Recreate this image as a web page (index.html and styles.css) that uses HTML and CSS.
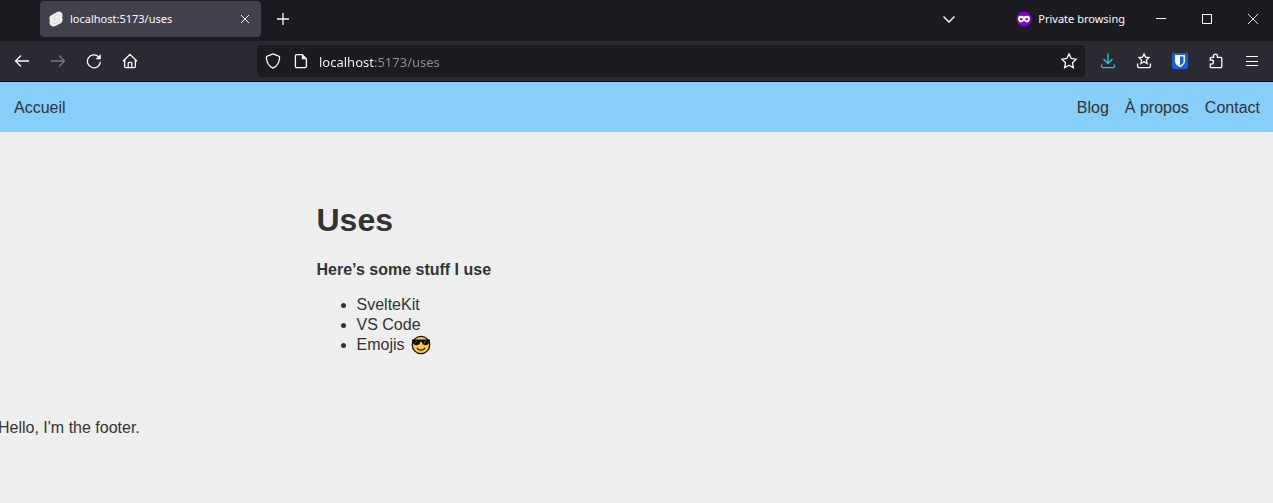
FILE: index.html
```html
<!DOCTYPE html>
<html lang="fr">
<head>
<meta charset="utf-8">
<meta name="viewport" content="width=device-width, initial-scale=1">
<title>localhost:5173/uses</title>
<link rel="stylesheet" href="styles.css">
</head>
<body>
<div class="browser">
  <div class="tab-strip">
    <div class="tab">
      <svg class="favicon" width="14" height="16" viewBox="0 0 14 16" aria-hidden="true">
        <path d="M8 1.1C10-.2 12.3.6 13.2 2.8c.5 1.2.4 2.3-.1 3.6.9 2 .6 4.1-1 5.6L6.500 15C4.200 16.300 1.700 15.400.8 13.100c-.5-1.200-.4-2.300.1-3.500C0 7.600.3 5.600 1.900 4.500Z" fill="#f0f0f0"/>
        <path d="M10.600 5.400c.3-1.500-1.100-2.400-2.500-1.600L4.300 6.200C2.700 7.500 3.600 9.200 5.300 8.700l3-1.200c2-.5 2.900 1.500 1.400 2.800l-3.600 2.200c-1.400.8-2.900 0-2.600-1.600" fill="none" stroke="#d8d8dc" stroke-width="1"/>
      </svg>
      <span class="tab-title">localhost:5173/uses</span>
      <button class="tab-close" type="button" aria-label="Close tab">
        <svg width="10" height="10" viewBox="0 0 10 10"><path d="M1 1l8 8M9 1l-8 8"/></svg>
      </button>
    </div>
    <button class="new-tab" type="button" aria-label="New tab">
      <svg width="14" height="14" viewBox="0 0 14 14"><path d="M7 1v12M1 7h12" stroke-width="1.300"/></svg>
    </button>
    <button class="all-tabs" type="button" aria-label="List all tabs">
      <svg width="14" height="14" viewBox="0 0 14 14"><path d="M1.500 4.500L7 10l5.500-5.500" stroke-width="1.400"/></svg>
    </button>
    <div class="private">
      <svg width="16" height="16" viewBox="0 0 16 16" aria-hidden="true">
        <circle cx="8" cy="8" r="7.500" fill="#8000d7" stroke="none"/>
        <path fill="#fff" fill-rule="evenodd" stroke="none" d="M2 7.500C2 5.600 3 4.700 5 4.700c1.400 0 2 .7 3 .7s1.600-.7 3-.7c2 0 3 .9 3 2.800 0 2.400-1.100 3.900-3 3.900-1.500 0-2-1.400-3-1.400s-1.500 1.400-3 1.400c-1.900 0-3-1.500-3-3.900ZM3.600 8c1 1.700 2.400 1.700 3.400 0-1-1.500-2.400-1.500-3.400 0ZM9 8c1 1.700 2.400 1.700 3.400 0-1-1.500-2.400-1.500-3.400 0Z"/>
      </svg>
      <span>Private browsing</span>
    </div>
    <div class="window-controls">
      <button type="button" aria-label="Minimize"><svg width="10" height="10" viewBox="0 0 10 10" shape-rendering="crispEdges"><path d="M0 4.500h10"/></svg></button>
      <button type="button" aria-label="Maximize"><svg width="10" height="10" viewBox="0 0 10 10" shape-rendering="crispEdges"><path d="M.5.500h9v9h-9z"/></svg></button>
      <button type="button" aria-label="Close"><svg width="10" height="10" viewBox="0 0 10 10"><path d="M0 0l10 10M10 0L0 10" stroke-width=".9"/></svg></button>
    </div>
  </div>

  <div class="toolbar">
    <div class="tools">
      <button type="button" aria-label="Back"><svg width="16" height="16" viewBox="0 0 16 16"><path d="M15 8H1.500M7 2.500L1.500 8 7 13.500"/></svg></button>
      <button type="button" aria-label="Forward" disabled><svg width="16" height="16" viewBox="0 0 16 16"><path d="M1 8h13.500M9 2.500L14.500 8 9 13.500"/></svg></button>
      <button type="button" aria-label="Reload"><svg width="16" height="16" viewBox="0 0 16 16"><path d="M14.400 8.700A6.500 6.500 0 1 1 12.600 3.800"/><path d="M14.800 1v5.200H9.600z" fill="#fbfbfe" stroke="none"/></svg></button>
      <button type="button" aria-label="Home"><svg width="16" height="16" viewBox="0 0 16 16"><path d="M1 8.300L8 1.300l7 7M2.600 7v6.300c0 .8.500 1.300 1.300 1.300h8.200c.8 0 1.300-.5 1.300-1.300V7M6.200 14.500V10.200c0-.6.300-.9.900-.9h1.800c.6 0 .9.300.9.900v4.300"/></svg></button>
    </div>
    <div class="url-bar">
      <button type="button" aria-label="Tracking protection"><svg width="16" height="16" viewBox="0 0 16 16"><path d="M8 .9l5.700 2.300c.6.200.9.700.9 1.300-.2 5-2.400 8.700-6.600 10.600C3.800 13.200 1.600 9.500 1.400 4.500c0-.6.300-1.100.9-1.300Z"/></svg></button>
      <button type="button" aria-label="Site information"><svg width="16" height="16" viewBox="0 0 16 16"><path d="M3.700 1.700h5.500l4.200 4.200v7.400c0 .8-.5 1.300-1.300 1.300H3.700c-.8 0-1.300-.5-1.300-1.300V3c0-.8.500-1.300 1.300-1.300Z"/><path d="M8.800 1.200L13.900 6.300H8.800z" fill="#fbfbfe" stroke="none"/></svg></button>
      <input class="url" type="text" value="localhost:5173/uses" aria-label="Address" spellcheck="false">
      <button class="bookmark" type="button" aria-label="Bookmark this page"><svg width="16" height="16" viewBox="0 0 16 16"><path d="M8 .9l2.200 4.600 5 .7-3.700 3.500.9 5L8 12.300l-4.400 2.400.9-5L.8 6.200l5-.7Z"/></svg></button>
    </div>
    <div class="tools">
      <button class="downloads" type="button" aria-label="Downloads"><svg width="16" height="16" viewBox="0 0 16 16"><path d="M8 .5v10M3.500 6L8 10.500 12.500 6M1.600 11.500v1.700c0 .9.500 1.400 1.400 1.400h10c.9 0 1.400-.5 1.400-1.400v-1.700"/></svg></button>
      <button type="button" aria-label="Bookmarks"><svg width="16" height="16" viewBox="0 0 16 16"><path d="M8 .9l1.500 3.200 3.500.4-2.600 2.400.7 3.500L8 8.700l-3.100 1.700.7-3.500L3 4.500l3.500-.4ZM1.600 10.500v2.700c0 .9.500 1.400 1.400 1.400h10c.9 0 1.400-.5 1.400-1.400v-2.700"/></svg></button>
      <button type="button" aria-label="Bitwarden"><svg width="16" height="16" viewBox="0 0 16 16"><rect width="16" height="16" rx="2" fill="#175ddc" stroke="none"/><path d="M3 2h10v6.500c0 2.400-2.500 4.500-5 5.700-2.500-1.200-5-3.300-5-5.700Z" fill="#fff" stroke="none"/><path d="M8 3.500h3.500v5c0 1.600-1.600 2.900-3.500 4Z" fill="#175ddc" stroke="none"/></svg></button>
      <button type="button" aria-label="Extensions"><svg width="16" height="16" viewBox="0 0 16 16"><path d="M2.200 7V5.500c0-.7.400-1.100 1.100-1.100h2.200V2.900c0-2.500 3.900-2.500 3.900 0v1.500h3.300c.7 0 1.100.4 1.100 1.100v8c0 .7-.4 1.100-1.100 1.100H3.300c-.7 0-1.100-.4-1.100-1.100v-2.300h1.400c2.500 0 2.500-4.200 0-4.200Z"/></svg></button>
      <button type="button" aria-label="Menu"><svg width="16" height="16" viewBox="0 0 16 16" shape-rendering="crispEdges"><path d="M2 3.500h12M2 8.500h12M2 12.500h12" stroke-width="1"/></svg></button>
    </div>
  </div>
</div>

<nav class="site-nav">
  <a href="#accueil">Accueil</a>
  <ul class="site-links">
    <li><a href="#blog">Blog</a></li>
    <li><a href="#a-propos">À propos</a></li>
    <li><a href="#contact">Contact</a></li>
  </ul>
</nav>

<main class="content">
  <h1>Uses</h1>
  <p><strong>Here’s some stuff I use</strong></p>
  <ul>
    <li>SvelteKit</li>
    <li>VS Code</li>
    <li>Emojis <svg class="emoji" width="20" height="20" viewBox="0 0 20 20" role="img" aria-label="Cool face">
      <circle cx="10" cy="10" r="8.700" fill="#ffc83d" stroke="#111" stroke-width="1.300"/>
      <path d="M1 4.500h18v2l-1 .5c-.2 2.200-1.400 3.200-3.400 3.200-2.200 0-3.400-1.100-3.800-3.200H9.200C8.800 9.100 7.600 10.200 5.400 10.200 3.400 10.200 2.200 9.200 2 7l-1-.5Z" fill="#111"/>
      <path d="M4 8l2-2M13 8l2-2" stroke="#777" stroke-width=".8"/>
      <path d="M6.300 13.300c1.900 2.500 5.500 2.500 7.400 0" fill="none" stroke="#111" stroke-width="1.300" stroke-linecap="round"/>
    </svg></li>
  </ul>
</main>

<footer class="site-footer">Hello, I'm the footer.</footer>
</body>
</html>
```
FILE: styles.css
```css
* {
  box-sizing: border-box;
}

body {
  margin: 0;
  background: #eee;
  color: #333;
  font: 16px/20px "Liberation Sans", Arial, sans-serif;
}

/* Browser window */
.browser {
  overflow: hidden;
  background: #1c1b22;
  color: #fbfbfe;
  font: 12px/16px "Noto Sans", "Open Sans", sans-serif;
}

.browser button {
  display: flex;
  align-items: center;
  justify-content: center;
  flex: none;
  padding: 0;
  border: 0;
  background: none;
  color: inherit;
}

.browser svg {
  flex: none;
  fill: none;
  stroke: currentColor;
}

.browser .favicon {
  stroke: none;
}

.tab-strip {
  display: flex;
  align-items: center;
  height: 41px;
  padding-left: 40px;
  padding-bottom: 3px;
}

.tab {
  display: flex;
  align-items: center;
  width: 221px;
  height: 36px;
  padding: 0 4px 0 9px;
  border-radius: 4px;
  background: #42414d;
}

.tab-title {
  flex: 1;
  margin-left: 7px;
  font-size: 11px;
  white-space: nowrap;
}

.browser .tab-close {
  width: 24px;
  height: 24px;
}

.browser .new-tab {
  width: 36px;
  height: 36px;
  margin-left: 4px;
}

.browser .all-tabs {
  width: 36px;
  height: 36px;
  margin-left: auto;
}

.private {
  display: flex;
  align-items: center;
  gap: 6px;
  margin: 0 13px 0 49px;
  font-size: 11px;
  white-space: nowrap;
}

.window-controls {
  display: flex;
  margin-right: -3px;
}

.window-controls button {
  width: 46px;
  height: 36px;
}

.toolbar {
  display: flex;
  align-items: center;
  height: 41px;
  padding: 0 3px 0 4px;
  border-bottom: 1px solid #0c0c0d;
  background: #2b2a33;
}

.tools {
  display: flex;
}

.tools button {
  width: 36px;
  height: 36px;
}

.toolbar svg {
  stroke-width: 1.3;
}

.toolbar button:disabled {
  color: #77767e;
}

.toolbar .downloads {
  color: #16c8e8;
}

.url-bar {
  display: flex;
  align-items: center;
  flex: 1;
  min-width: 0;
  height: 32px;
  margin: 0 5px 0 109px;
  padding-left: 2px;
  border-radius: 4px;
  background: #1c1b22;
}

.url-bar button {
  width: 28px;
  height: 28px;
}

.url-bar .bookmark {
  width: 32px;
}

.url {
  flex: 1;
  min-width: 0;
  margin-left: 4px;
  padding: 2px 0 0;
  border: 0;
  outline: 0;
  background: linear-gradient(90deg, #fbfbfe 55px, #8f8f98 55px);
  background-clip: text;
  color: transparent;
  font: 13px/20px "Noto Sans", "Open Sans", sans-serif;
}

/* Site */
.site-nav {
  display: flex;
  align-items: center;
  justify-content: space-between;
  height: 50px;
  padding: 2px 13px 0 14px;
  background: #87cefa;
}

.site-nav a {
  color: inherit;
  text-decoration: none;
}

.site-links {
  display: flex;
  gap: 16px;
  margin: 0;
  padding: 0;
  list-style: none;
}

.content {
  max-width: 640px;
  margin: 0 auto;
  padding: 66px 0 63px;
}

.content h1 {
  margin: 0 0 18px;
  font-size: 32px;
  line-height: 44px;
}

.content p,
.content ul {
  margin: 0 0 15px;
}

.content ul {
  margin-bottom: 0;
  padding-left: 40px;
}

.emoji {
  display: inline-block;
  vertical-align: middle;
  margin: -2px 0 0 2px;
}

.content li {
  height: 20px;
}

.site-footer {
  margin-left: -2px;
}
```
